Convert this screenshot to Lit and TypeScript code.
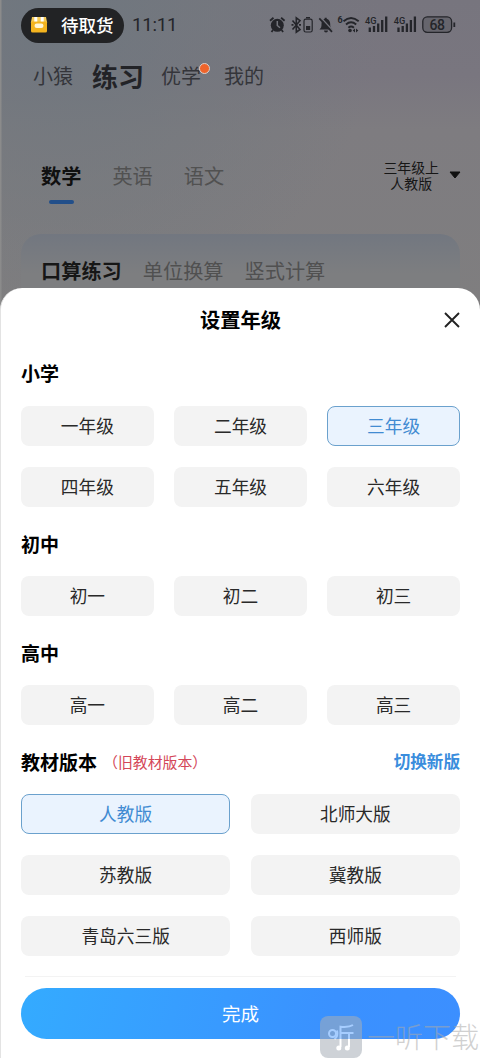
import { LitElement, html, css, svg } from "lit";
import { customElement, state } from "lit/decorators.js";
import { classMap } from "lit/directives/class-map.js";

const STAGES = [
  { title: "小学", grades: ["一年级", "二年级", "三年级", "四年级", "五年级", "六年级"] },
  { title: "初中", grades: ["初一", "初二", "初三"] },
  { title: "高中", grades: ["高一", "高二", "高三"] },
];
const EDITIONS = ["人教版", "北师大版", "苏教版", "冀教版", "青岛六三版", "西师版"];

const signal = svg`<text x="0" y="9" font-size="9.500" font-weight="500" textLength="11.500" lengthAdjust="spacingAndGlyphs">4G</text>
  <path d="M4.800 17v-4.500M9 17v-6M13.200 17V8.500M17.200 17V5M21.200 17V1.500" stroke="currentColor" stroke-width="2.300" stroke-linecap="butt" fill="none"/>`;

@customElement("status-bar")
class StatusBar extends LitElement {
  static styles = css`
    :host { display: flex; align-items: center; height: 50px; padding: 0 21px; box-sizing: border-box; color: #24252a; }
    .pill { display: flex; align-items: center; width: 103px; height: 35px; box-sizing: border-box; padding: 0 0 1px 9px; gap: 13px; border-radius: 18px; background: #222325; color: #fff; font-size: 17.500px; font-weight: 500; white-space: nowrap; }
    .time { margin-left: 8px; font-family: Roboto, sans-serif; font-size: 18.600px; letter-spacing: -0.2px; width: 50px; }
    .icons { margin-left: 87px; flex: none; }
    svg { display: block; }
    text { font-family: Roboto, sans-serif; fill: currentColor; }
  `;
  render() {
    return html`
      <div class="pill">
        <svg width="18" height="17" viewBox="0 0 18 17">
          <path d="M2 1h14l1.200 6H.800z" fill="#f6cb55"/><rect x="1" y="5.500" width="16" height="11" rx="1.500" fill="#f4b41f"/>
          <path d="M5.800 1v4.500M12.200 1v4.500" stroke="#fff" stroke-width="3"/><rect x="4.500" y="7.500" width="9" height="4.500" rx="2.200" fill="#fff6d8"/>
        </svg><span>待取货</span>
      </div>
      <span class="time">11:11</span>
      <svg class="icons" width="190" height="20" viewBox="270 15 190 20">
        <circle cx="278.300" cy="25.300" r="6.500" fill="currentColor"/>
        <path d="M271 20.800l3.500-3M285.600 20.800l-3.500-3M274 30l-1.500 2M282.600 30l1.500 2" stroke="currentColor" stroke-width="1.800"/>
        <path d="M278.300 21v4.500l2.700 2.300" stroke="#74767d" stroke-width="1.500" fill="none"/>
        <path d="M293.500 20.500l7.500 9-3.700 2.700V17.800l3.700 2.900-7.500 8.800" stroke="currentColor" stroke-width="1.600" fill="none"/>
        <path d="M292.500 24.900h2M300 24.900h2" stroke="currentColor" stroke-width="1.700"/>
        <rect x="305" y="19.200" width="8.200" height="12.800" rx="1.800" fill="none" stroke="currentColor" stroke-width="1.200"/>
        <path d="M307 17.700h4" stroke="currentColor" stroke-width="1.400"/><rect x="307" y="26" width="4.200" height="4" fill="currentColor"/>
        <path d="M320.500 29.500c1.800-1.500 2-3 2-5.500 0-3 1.600-5 3.200-5.300v-1h2v1c2.300.6 3.500 2.700 3.500 5.300 0 2.500.3 4 2.100 5.500zM325 30.500h4a2 2 0 01-4 0z" fill="currentColor"/>
        <path d="M321.800 17.500l12 13" stroke="#74747c" stroke-width="1.400"/><path d="M320.300 18.300l12.700 13.500" stroke="currentColor" stroke-width="1.700"/>
        <text x="338.500" y="23" font-size="9" font-weight="700">6</text>
        <path d="M344.500 21.200q7.500-6.500 15.200 0M347 24.500q5-4.300 10.200 0M349.400 27.700q2.700-2.300 5.500 0" fill="none" stroke="currentColor" stroke-width="1.900"/>
        <circle cx="351" cy="30.500" r="1.800" fill="currentColor"/><path d="M356 28.500v4l-2.300-2zM357 28.500v4l2.300-2z" fill="currentColor"/>
        <g transform="translate(366 15)">${signal}</g><g transform="translate(394.700 15)">${signal}</g>
        <rect x="423.800" y="16.800" width="28.800" height="15.500" rx="4.500" fill="#66656d" stroke="currentColor" stroke-width="1.300"/>
        <path d="M455.300 22.500v4.500" stroke="currentColor" stroke-width="1.800"/>
        <text x="430.500" y="29.500" font-size="14" font-weight="500" textLength="15.500">68</text>
      </svg>`;
  }
}

@customElement("practice-page")
class PracticePage extends LitElement {
  static styles = css`
    :host { display: block; height: 310px; background: linear-gradient(90deg, #8b8b8b 0, #8b8b8b 1px, transparent 2px), radial-gradient(circle at 12% 0, #6f777f 0, #72787e99 30%, transparent 62%), linear-gradient(180deg, #77757e 0, #79767f 75px, #7e7c80 130px, #7f7e7f 100%); }
    .nav { display: flex; align-items: center; height: 50px; padding: 0 0 2px 33px; font-size: 20px; color: #34353a; }
    .nav span { margin-right: 19px; }
    .nav .current { font-size: 26px; font-weight: 700; color: #222327; margin-right: 17px; }
    .nav .fresh { position: relative; margin-right: 23px; }
    .fresh::after { content: ""; position: absolute; width: 9px; height: 9px; right: -9px; top: 2px; border: 1px solid #ddd0cb; border-radius: 50%; background: #ef642b; }
    .subjects { display: flex; height: 132px; padding: 57px 20px 0 41px; box-sizing: border-box; font-size: 20.200px; line-height: 34px; color: #515151; }
    .subject { margin-right: 31px; }
    .subject.current { color: #101010; font-weight: 700; }
    .subject.current::after { content: ""; display: block; width: 25px; height: 4px; border-radius: 2px; margin: 6.500px auto 0; background: #224f8a; }
    .book { margin-left: auto; display: flex; align-items: center; height: 32px; font-size: 13.900px; line-height: 16px; text-align: center; color: #161616; gap: 10px; margin-right: -1px; }
    .card { display: flex; gap: 21px; height: 76px; margin: 0 20px 0 21px; padding: 20px 20px 0; box-sizing: border-box; border-radius: 20px 20px 0 0; background: linear-gradient(#727780, #7d7e80 40px); font-size: 20.200px; line-height: 34px; color: #505050; }
    .card .current { color: #161616; font-weight: 700; }
  `;
  render() {
    return html`<status-bar></status-bar>
      <nav class="nav"><span>小猿</span><span class="current">练习</span><span class="fresh">优学</span><span>我的</span></nav>
      <div class="subjects"><span class="subject current">数学</span><span class="subject">英语</span><span class="subject">语文</span>
        <div class="book"><div>三年级上<br>人教版</div><svg width="12" height="8" viewBox="0 0 12 8"><path d="M1 1h10L6 7z" fill="#111" stroke="#111" stroke-linejoin="round"/></svg></div>
      </div>
      <div class="card"><span class="current">口算练习</span><span>单位换算</span><span>竖式计算</span></div>`;
  }
}

@customElement("app-root")
class AppRoot extends LitElement {
  @state() grade = "三年级";
  @state() edition = "人教版";
  static styles = css`
    :host { display: block; position: relative; height: 1058px; overflow: hidden; background: #fff; font-family: "Noto Sans CJK SC", "Noto Sans", sans-serif; }
    .sheet { position: absolute; inset: 288px 0 0 0; box-sizing: border-box; padding: 0 20px 0 20px; border-left: 1px solid #e3e3e3; border-radius: 22px 22px 0 0; background: #fff; }
    .header { display: grid; grid-template-columns: 1fr auto 1fr; align-items: center; height: 64px; color: #000; }
    .title { grid-column: 2; font-size: 20.300px; font-weight: 700; padding-bottom: 2px; }
    .close { justify-self: end; margin-right: -1px; }
    .heading { display: flex; align-items: center; height: 68.400px; box-sizing: border-box; padding-top: 3.200px; color: #000; font-size: 19px; font-weight: 700; }
    .heading.first { height: 53.700px; padding: 0 0 13px; }
    .note { font-size: 14.900px; font-weight: 400; color: #d44759; margin-left: 6px; }
    .switch { font-size: 16.600px; color: #3a8ddd; margin-left: auto; }
    .grid { display: grid; grid-template-columns: repeat(3, 1fr); gap: 20.400px; grid-auto-rows: 40.600px; }
    .grid.two { grid-template-columns: repeat(2, 1fr); }
    button { margin: 0; padding: 0 0 1px; border: 1px solid transparent; border-radius: 8px; background: #f3f3f3; color: #292929; font-family: inherit; font-size: 17.700px; line-height: 1; }
    button.selected { border-color: #6ba1cd; background: #eaf3fe; color: #418bd2; }
    .divider { height: 1px; margin: 20px 4px 10.500px; background: #f3f3f3; }
    .done { display: block; width: 100%; height: 51px; padding: 1px 0 0; border: 0; border-radius: 26px; color: #fff; font-size: 18.500px; background: linear-gradient(105deg, #34abff, #3a91ff 70%, #3c8fff); }
    .mark { position: absolute; left: 320px; top: 1016px; display: flex; align-items: center; gap: 5px; color: #aaa; opacity: .55; font-size: 28px; font-weight: 300; line-height: 38px; white-space: nowrap; }
    .mark svg { display: block; }
    .mark span { padding-bottom: 3px; }
  `;
  choice(label: string, selected: boolean, pick: () => void) {
    return html`<button class=${classMap({ selected })} @click=${pick}>${label}</button>`;
  }
  render() {
    return html`<practice-page></practice-page>
      <section class="sheet">
        <div class="header"><span class="title">设置年级</span><svg class="close" width="18" height="18" viewBox="0 0 18 18"><path d="M2 2l14 14M16 2L2 16" stroke="#222" stroke-width="1.900"/></svg></div>
        ${STAGES.map((stage, i) => html`<div class=${classMap({ heading: true, first: i === 0 })}>${stage.title}</div>
          <div class="grid">${stage.grades.map((g) => this.choice(g, g === this.grade, () => { this.grade = g; }))}</div>`)}
        <div class="heading">教材版本<span class="note">（旧教材版本）</span><span class="switch">切换新版</span></div>
        <div class="grid two">${EDITIONS.map((e) => this.choice(e, e === this.edition, () => { this.edition = e; }))}</div>
        <div class="divider"></div>
        <button class="done">完成</button>
      </section>
      <div class="mark"><svg width="42" height="42" viewBox="0 0 42 42"><rect width="42" height="42" rx="8" fill="#a7afb8"/>
        <g fill="none" stroke="#fff" stroke-width="2"><circle cx="12.500" cy="17.500" r="3.500"/><path d="M17 14.500q1.500 6-2.500 8.500M33 9q-4 2.500-12.500 1.700V31M20.500 17h13M29 17v14"/></g><circle cx="18.800" cy="32" r="2.500" fill="#fff"/><circle cx="27.300" cy="32" r="2.500" fill="#fff"/></svg><span>一听下载</span></div>`;
  }
}
